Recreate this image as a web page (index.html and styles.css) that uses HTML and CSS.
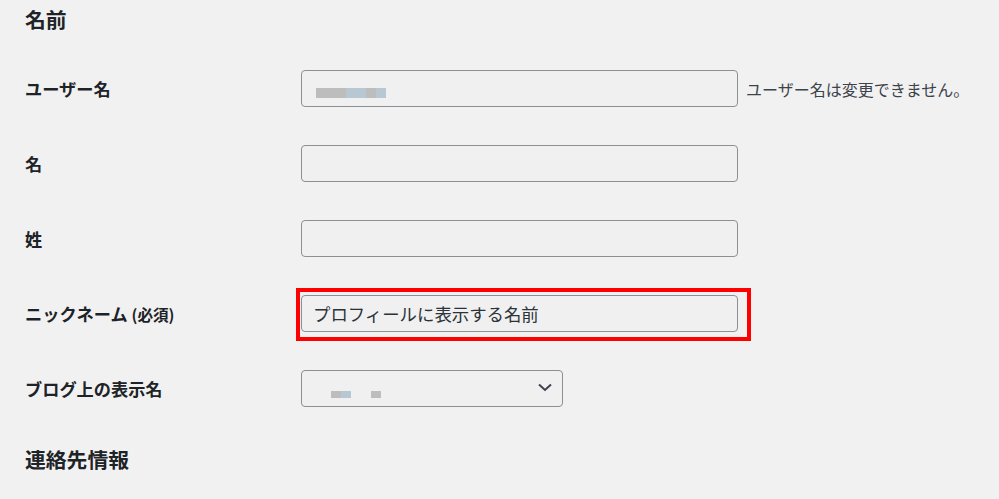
FILE: index.html
```html
<!DOCTYPE html>
<html lang="ja">

<head>
  <meta charset="UTF-8" />
  <meta name="viewport" content="width=device-width, initial-scale=1.0" />
  <title>プロフィール</title>
  <link rel="stylesheet" href="styles.css">
</head>

<body>
  <div class="profile">
    <h2 class="section-title">名前</h2>

    <div class="form-table">
      <!-- ユーザー名 -->
      <div class="form-row">
        <label class="row-label">ユーザー名</label>
        <div class="row-field">
          <div class="text-input disabled">
            <span class="blur gray w30"></span><span class="blur blue w20"></span><span class="blur gray w10"></span><span class="blur blue w10"></span>
          </div>
          <span class="help">ユーザー名は変更できません。</span>
        </div>
      </div>

      <div class="form-row">
        <label class="row-label">名</label>
        <div class="row-field">
          <div class="text-input"></div>
        </div>
      </div>

      <div class="form-row">
        <label class="row-label">姓</label>
        <div class="row-field">
          <div class="text-input"></div>
        </div>
      </div>

      <!-- ニックネーム -->
      <div class="form-row">
        <label class="row-label">ニックネーム <span class="required">(必須)</span></label>
        <div class="row-field">
          <div class="highlight-wrap">
            <div class="text-input filled">プロフィールに表示する名前</div>
            <span class="highlight"></span>
          </div>
        </div>
      </div>

      <div class="form-row">
        <label class="row-label">ブログ上の表示名</label>
        <div class="row-field">
          <div class="select-input">
            <div class="select-value">
              <span class="blur gray w10"></span><span class="blur blue w10"></span><span class="blur gap"></span><span class="blur gray w10"></span>
            </div>
            <svg class="chevron" width="14" height="9" viewBox="0 0 14 9">
              <polyline points="1,1.5 7,7 13,1.5" fill="none" stroke="#3c434a" stroke-width="2" />
            </svg>
          </div>
        </div>
      </div>
    </div>

    <h2 class="section-title contact">連絡先情報</h2>
  </div>
</body>

</html>
```

FILE: styles.css
```css
body {
  margin: 0;
  background-color: #f1f1f1;
  font-family: "Noto Sans CJK JP", "Noto Sans", sans-serif;
  color: #1d2327;
}

.profile {
  padding-left: 25px;
}

.section-title {
  margin: 4px 0 17px;
  font-size: 20.8px;
  line-height: 30px;
  font-weight: 700;
}

.section-title.contact {
  margin-top: 18px;
}

.form-row {
  display: flex;
  align-items: center;
  height: 75px;
}

.row-label {
  width: 276px;
  font-size: 17.2px;
  font-weight: 700;
  white-space: nowrap;
}

.required {
  font-size: 15.6px;
}

.row-field {
  display: flex;
  align-items: center;
}

.text-input {
  width: 437px;
  height: 37px;
  box-sizing: border-box;
  border: 1px solid #8c8f94;
  border-radius: 4px;
  background-color: #f0f0f1;
  display: flex;
  align-items: center;
  padding: 0 14px;
}

.text-input.disabled .blur {
  margin-top: 9px;
}

.text-input.filled {
  padding-left: 11px;
  font-size: 17.4px;
  color: #2c3338;
}

.help {
  margin-left: 8px;
  font-size: 16px;
  color: #3c434a;
}

.blur {
  display: inline-block;
  height: 10px;
}

.blur.gray {
  background-color: #bdbdbd;
}

.blur.blue {
  background-color: #b8c8d3;
}

.w10 {
  width: 10px;
}

.w20 {
  width: 20px;
}

.w30 {
  width: 30px;
}

.highlight-wrap {
  position: relative;
}

.highlight {
  position: absolute;
  left: -5px;
  top: -7px;
  width: 455px;
  height: 53px;
  box-sizing: border-box;
  border: 4px solid #ff0000;
}

.select-input {
  width: 262px;
  height: 37px;
  box-sizing: border-box;
  border: 1px solid #8c8f94;
  border-radius: 4px;
  background-color: #f0f0f1;
  display: flex;
  align-items: center;
  justify-content: space-between;
  padding: 0 10px 0 29px;
}

.select-value {
  display: flex;
  margin-top: 12px;
}

.select-value .blur {
  height: 7px;
}

.blur.gap {
  width: 20px;
}

.chevron {
  margin-top: -3px;
}
```
